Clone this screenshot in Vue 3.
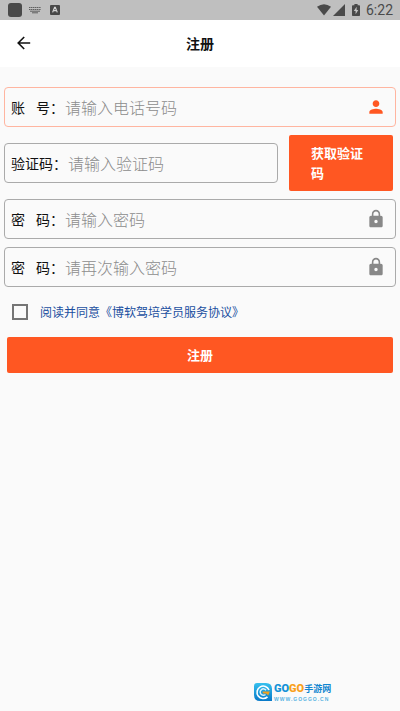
<script setup>
import { reactive } from 'vue'

const form = reactive({ phone: '', code: '', password: '', confirm: '', agreed: false })
</script>

<template>
  <div class="screen">
    <div class="status">
      <div class="status-group">
        <span class="app-block"></span>
        <svg class="keyboard" width="14" height="8" viewBox="0 0 14 8" aria-hidden="true">
          <path d="M1 1.500h12M1 3.500h12" stroke="#606060" stroke-width="1.200" stroke-dasharray="1.400 .5" fill="none" />
          <path d="M2 5.200h10M4 6.800h6" stroke="#606060" stroke-width="1" fill="none" />
        </svg>
        <svg class="a-badge" width="10" height="10" viewBox="0 0 10 10" aria-hidden="true">
          <rect width="10" height="10" rx="1" fill="#484848" />
          <path d="M2.600 7.400L4.600 2.400h.7l2 5M3.300 5.700h3.200" stroke="#d4d4d4" stroke-width="1.200" fill="none" />
        </svg>
      </div>
      <div class="status-group right">
        <svg width="14" height="12" viewBox="0 0 14 12" aria-hidden="true">
          <path d="M0 2.800Q7-2.200 14 2.800L7 11.600z" fill="#4a4a4a" />
        </svg>
        <svg class="signal" width="12" height="12" viewBox="0 0 12 12" aria-hidden="true">
          <path d="M12 0v12H0z" fill="#4a4a4a" />
        </svg>
        <svg class="battery" width="8" height="12" viewBox="0 0 8 12" aria-hidden="true">
          <path d="M2.400 0h3.200v1.200H7.200q.8 0 .8.8v9.200q0 .8-.8.8H.8q-.8 0-.8-.8V2q0-.8.8-.8h1.600z" fill="#4a4a4a" />
          <path d="M4.600 2.800L1.800 7h1.800v3.200L6.300 6H4.600z" fill="#c4c4c4" />
        </svg>
        <span class="clock">6:22</span>
      </div>
    </div>

    <header class="bar">
      <button class="back" type="button" aria-label="返回">
        <svg width="14" height="14" viewBox="0 0 14 14" aria-hidden="true">
          <path d="M13.200 7H1.300M7.200 1L1.200 7l6 6" stroke="#111" stroke-width="1.600" fill="none" />
        </svg>
      </button>
      <h1 class="title">注册</h1>
    </header>

    <form class="form" @submit.prevent>
      <div class="field active">
        <label for="phone"><span>账</span><span>号：</span></label>
        <input id="phone" v-model="form.phone" type="tel" placeholder="请输入电话号码" />
        <svg class="icon" width="20" height="20" viewBox="0 0 24 24" aria-hidden="true">
          <path d="M12 12c2.200 0 4-1.800 4-4s-1.800-4-4-4-4 1.800-4 4 1.800 4 4 4zm0 2c-2.700 0-8 1.300-8 4v2h16v-2c0-2.700-5.300-4-8-4z" fill="#ff5722" />
        </svg>
      </div>

      <div class="code-row">
        <div class="field">
          <label for="code">验证码：</label>
          <input id="code" v-model="form.code" type="text" placeholder="请输入验证码" />
        </div>
        <button class="send" type="button">获取验证码</button>
      </div>

      <div class="field">
        <label for="password"><span>密</span><span>码：</span></label>
        <input id="password" v-model="form.password" type="password" placeholder="请输入密码" />
        <svg class="icon" width="20" height="20" viewBox="0 0 24 24" aria-hidden="true">
          <path d="M18 8h-1V6c0-2.760-2.240-5-5-5S7 3.240 7 6v2H6c-1.100 0-2 .9-2 2v10c0 1.100.9 2 2 2h12c1.100 0 2-.9 2-2V10c0-1.100-.9-2-2-2zm-6 9c-1.100 0-2-.9-2-2s.9-2 2-2 2 .9 2 2-.9 2-2 2zm3.100-9H8.900V6c0-1.710 1.390-3.100 3.100-3.100s3.100 1.390 3.100 3.100v2z" fill="#888" />
        </svg>
      </div>

      <div class="field">
        <label for="confirm"><span>密</span><span>码：</span></label>
        <input id="confirm" v-model="form.confirm" type="password" placeholder="请再次输入密码" />
        <svg class="icon" width="20" height="20" viewBox="0 0 24 24" aria-hidden="true">
          <path d="M18 8h-1V6c0-2.760-2.240-5-5-5S7 3.240 7 6v2H6c-1.100 0-2 .9-2 2v10c0 1.100.9 2 2 2h12c1.100 0 2-.9 2-2V10c0-1.100-.9-2-2-2zm-6 9c-1.100 0-2-.9-2-2s.9-2 2-2 2 .9 2 2-.9 2-2 2zm3.100-9H8.900V6c0-1.710 1.390-3.100 3.100-3.100s3.100 1.390 3.100 3.100v2z" fill="#888" />
        </svg>
      </div>

      <div class="agree">
        <input v-model="form.agreed" type="checkbox" aria-labelledby="agreement" />
        <a id="agreement" href="#agreement">阅读并同意《博软驾培学员服务协议》</a>
      </div>

      <button class="submit" type="submit">注册</button>
    </form>

    <footer class="brand">
      <svg width="18" height="18" viewBox="0 0 18 18" aria-hidden="true">
        <defs>
          <linearGradient id="brand-blue" x1="0" y1="0" x2="0" y2="1">
            <stop offset="0" stop-color="#35c0ee" />
            <stop offset="1" stop-color="#0879c8" />
          </linearGradient>
        </defs>
        <path d="M3 0h9q6 0 6 6v12H6q-6 0-6-6V3q0-3 3-3z" fill="url(#brand-blue)" />
        <path d="M15 7A6.200 6.200 0 1 0 13.500 13.800" stroke="#fff" stroke-width="1.600" fill="none" />
        <path d="M12 7.200A3.200 3.200 0 1 0 11.500 11.500" stroke="#d8f2fc" stroke-width="1.500" fill="none" />
        <path d="M8.500 8.400H15.800l-1.600 4.100-2-2H9z" fill="#f6a11c" />
      </svg>
      <div class="brand-text">
        <div class="brand-name"><b class="blue">GO</b><b class="orange">GO</b><span>手游网</span></div>
        <div class="brand-url">WWW.GOGGO.CN</div>
      </div>
    </footer>
  </div>
</template>

<style>
body {
  background: #fafafa;
}
</style>

<style scoped>
.screen {
  display: flex;
  flex-direction: column;
  min-height: 100vh;
  background: #fafafa;
  color: #111;
  font-family: Roboto, "Noto Sans CJK SC", sans-serif;
}

.status {
  display: flex;
  justify-content: space-between;
  align-items: center;
  height: 20px;
  padding: 0 7px 0 8px;
  background: #bfbfbf;
}

.status-group {
  display: flex;
  align-items: center;
}

.app-block {
  width: 14px;
  height: 14px;
  border-radius: 3px;
  background: #4a4a4a;
}

.keyboard {
  margin-left: 6px;
}

.a-badge {
  margin-left: 8px;
}

.signal {
  margin-left: 2px;
}

.battery {
  margin: 0 6px 0 7px;
}

.clock {
  color: #4a4a4a;
  font-size: 14px;
  line-height: 20px;
}

.bar {
  display: grid;
  grid-template-columns: 48px 1fr 48px;
  align-items: center;
  box-sizing: border-box;
  height: 47px;
  padding-bottom: 1px;
  background: #fff;
}

.back {
  display: flex;
  align-items: center;
  height: 46px;
  padding: 0 0 0 17px;
  border: 0;
  background: none;
}

.title {
  margin: 0;
  font-family: "Noto Sans CJK SC", sans-serif;
  font-size: 14px;
  font-weight: 600;
  line-height: 20px;
  text-align: center;
}

.form {
  display: flex;
  flex-direction: column;
  gap: 8px;
  padding: 20px 4px 0;
  font-family: "Noto Sans CJK SC", sans-serif;
}

.field {
  display: flex;
  flex: 1;
  align-items: center;
  box-sizing: border-box;
  min-width: 0;
  min-height: 40px;
  padding: 0 9px 0 6px;
  border: 1px solid #aaa;
  border-radius: 4px;
}

.active {
  border-color: #ffb5a0;
}

.field label {
  display: flex;
  gap: 11px;
  font-size: 14px;
  line-height: 20px;
}

.field input {
  flex: 1;
  min-width: 0;
  height: 24px;
  padding: 0 1px;
  border: 0;
  outline: 0;
  background: none;
  color: #111;
  font-family: inherit;
  font-size: 16px;
  line-height: 24px;
}

.field input::placeholder {
  color: #8c8c8c;
  font-weight: 300;
  opacity: 1;
}

.icon {
  flex: none;
}

.code-row {
  display: flex;
  align-items: center;
  gap: 11px;
  padding-right: 3px;
}

.send,
.submit {
  border: 0;
  border-radius: 2px;
  background: #ff5722;
  color: #fff;
  font-family: inherit;
  font-size: 13px;
  font-weight: 600;
  line-height: 20px;
}

.send {
  width: 104px;
  padding: 8px 22px;
  text-align: left;
}

.agree {
  display: flex;
  align-items: center;
  gap: 12px;
  height: 34px;
  padding-left: 8px;
}

.agree input {
  appearance: none;
  box-sizing: border-box;
  width: 16px;
  height: 16px;
  margin: 0;
  border: 2px solid #757575;
}

.agree input:checked {
  border-color: #ff5722;
  background: #ff5722;
}

.agree a {
  color: #1a4fa0;
  font-size: 12px;
  line-height: 20px;
  text-decoration: none;
}

.submit {
  margin: 0 3px;
  padding: 8px;
}

.brand {
  display: flex;
  align-items: center;
  gap: 2px;
  margin-top: auto;
  padding: 0 0 9px 254px;
}

.brand-name {
  display: flex;
  align-items: center;
  font-family: "Noto Sans CJK SC", sans-serif;
  font-size: 9px;
  font-weight: 700;
  line-height: 14px;
  color: #1186d0;
}

.brand-name b {
  font-family: "Liberation Sans Narrow", Roboto, sans-serif;
  font-size: 11px;
}

.brand-name .blue {
  color: #1593d8;
}

.brand-name .orange {
  color: #f9a11b;
}

.brand-url {
  color: #58b4e2;
  font-family: "Liberation Sans", sans-serif;
  font-size: 5px;
  font-weight: 700;
  line-height: 6px;
  letter-spacing: 1px;
}
</style>
